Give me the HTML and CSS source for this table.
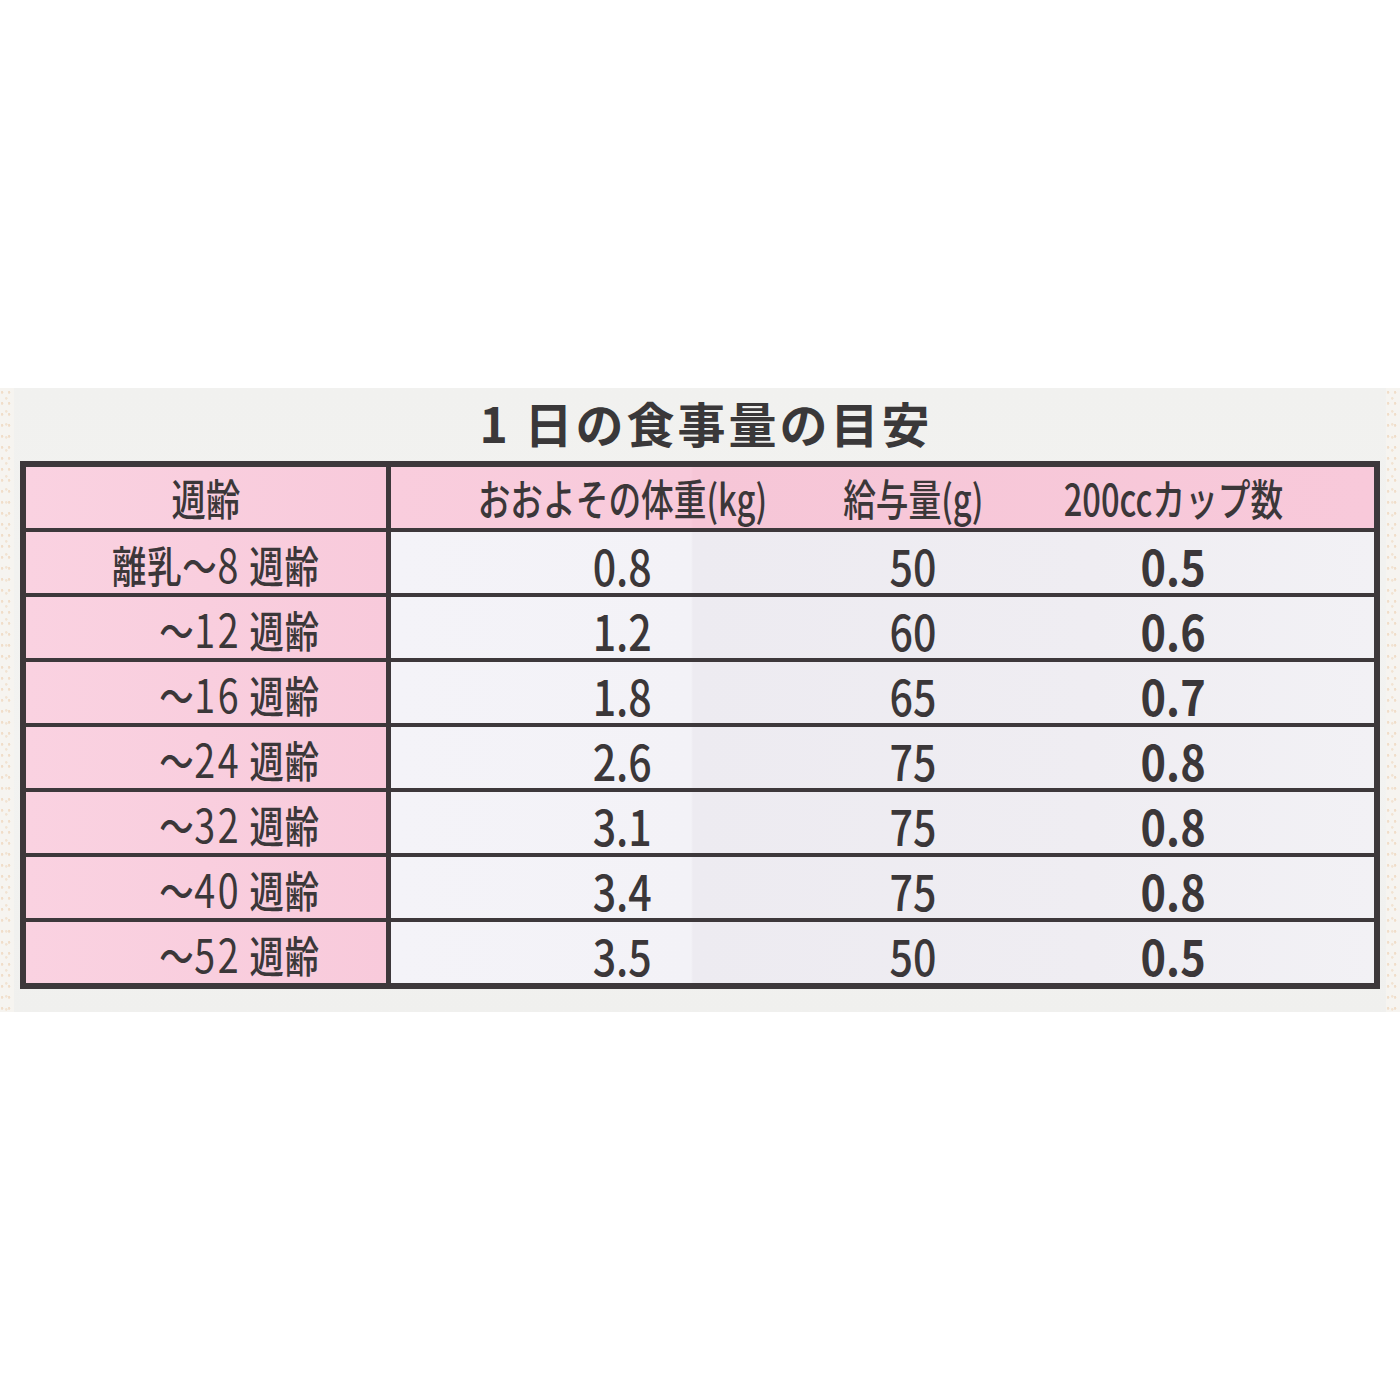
FILE: index.html
```html
<!DOCTYPE html>
<html lang="ja">
<head>
<meta charset="utf-8">
<title>1日の食事量の目安</title>
<link rel="stylesheet" href="styles.css">
</head>
<body>
<div class="panel">
  <div class="edge edge-left"></div>
  <div class="content">
    <h1 class="title">1 日の食事量の目安</h1>
    <div class="table">
      <div class="age head"><span class="sq">週齢</span></div>
      <div class="vals head">
        <div class="cell"><span class="sq">おおよその体重(kg)</span></div>
        <div class="cell"><span class="sq">給与量(g)</span></div>
        <div class="cell"><span class="sq">200ccカップ数</span></div>
      </div>

      <div class="age"><span class="sq">離乳～<span class="n">8</span> 週齢</span></div>
      <div class="vals">
        <div class="cell"><span class="num">0.8</span></div>
        <div class="cell"><span class="num">50</span></div>
        <div class="cell"><span class="num bold">0.5</span></div>
      </div>

      <div class="age"><span class="sq">～<span class="n">12</span> 週齢</span></div>
      <div class="vals">
        <div class="cell"><span class="num">1.2</span></div>
        <div class="cell"><span class="num">60</span></div>
        <div class="cell"><span class="num bold">0.6</span></div>
      </div>

      <div class="age"><span class="sq">～<span class="n">16</span> 週齢</span></div>
      <div class="vals">
        <div class="cell"><span class="num">1.8</span></div>
        <div class="cell"><span class="num">65</span></div>
        <div class="cell"><span class="num bold">0.7</span></div>
      </div>

      <div class="age"><span class="sq">～<span class="n">24</span> 週齢</span></div>
      <div class="vals">
        <div class="cell"><span class="num">2.6</span></div>
        <div class="cell"><span class="num">75</span></div>
        <div class="cell"><span class="num bold">0.8</span></div>
      </div>

      <div class="age"><span class="sq">～<span class="n">32</span> 週齢</span></div>
      <div class="vals">
        <div class="cell"><span class="num">3.1</span></div>
        <div class="cell"><span class="num">75</span></div>
        <div class="cell"><span class="num bold">0.8</span></div>
      </div>

      <div class="age"><span class="sq">～<span class="n">40</span> 週齢</span></div>
      <div class="vals">
        <div class="cell"><span class="num">3.4</span></div>
        <div class="cell"><span class="num">75</span></div>
        <div class="cell"><span class="num bold">0.8</span></div>
      </div>

      <div class="age"><span class="sq">～<span class="n">52</span> 週齢</span></div>
      <div class="vals">
        <div class="cell"><span class="num">3.5</span></div>
        <div class="cell"><span class="num">50</span></div>
        <div class="cell"><span class="num bold">0.5</span></div>
      </div>
    </div>
  </div>
  <div class="edge edge-right"></div>
</div>
</body>
</html>
```

FILE: styles.css
```css
html, body {
  margin: 0;
  padding: 0;
  background: #ffffff;
}

body {
  width: 1400px;
  height: 1400px;
  font-family: "Noto Sans CJK JP", "Noto Sans", sans-serif;
  color: #3b3739;
}

.panel {
  margin-top: 388px;
  height: 624px;
  display: grid;
  grid-template-columns: 14px 1fr 14px;
  background: linear-gradient(180deg, #f1f1ef 0%, #f3f3f1 60%, #f0f0ee 100%);
}

.edge {
  background-color: #f6f4f0;
  background-image:
    radial-gradient(circle at 30% 40%, rgba(226, 170, 110, 0.3) 0 1px, transparent 1.6px),
    radial-gradient(circle at 70% 80%, rgba(226, 170, 110, 0.22) 0 1px, transparent 1.6px);
  background-size: 7px 11px, 9px 13px;
}

.content {
  padding: 0 6px;
  display: flex;
  flex-direction: column;
}

.title {
  margin: 0;
  height: 73px;
  line-height: 68px;
  text-align: center;
  font-size: 48px;
  font-weight: 700;
  letter-spacing: 3px;
  color: #3a3839;
  padding-left: 12px;
}

.table {
  display: grid;
  grid-template-columns: 360px 1fr;
  grid-template-rows: 61px repeat(7, 61px);
  column-gap: 5px;
  row-gap: 4px;
  background: #3d383b;
  border: 6px solid #3d383b;
}

.age {
  background: linear-gradient(90deg, #fad2e1 0%, #f8cadb 100%);
  display: flex;
  align-items: center;
  justify-content: flex-end;
  padding-right: 66px;
  font-size: 43px;
  font-weight: 500;
}

.age.head {
  justify-content: center;
  padding-right: 0;
}

.age .sq {
  transform-origin: right center;
  letter-spacing: 1px;
}

.age.head .sq {
  transform-origin: center center;
  letter-spacing: 0;
}

.age .n {
  font-size: 47px;
  font-weight: 400;
  letter-spacing: 3px;
}

.vals {
  display: grid;
  grid-template-columns: 462px 120px 1fr;
  background: linear-gradient(90deg, #f4f3f8 0px, #f3f2f7 300px, #edebf1 302px, #efedf2 700px, #f2f1f5 100%);
}

.vals.head {
  background: linear-gradient(90deg, #f9cddd 0px, #f8cadb 300px, #f6c6d7 302px, #f8c9da 100%);
}

.cell {
  display: flex;
  align-items: center;
  justify-content: center;
  white-space: nowrap;
}

.sq {
  display: inline-block;
  white-space: nowrap;
  transform: scaleX(0.8);
  line-height: 1;
}

.vals.head .sq {
  font-size: 43px;
  font-weight: 500;
  transform: scaleX(0.76);
}

.num {
  display: inline-block;
  font-size: 49px;
  font-weight: 500;
  line-height: 1;
  transform: scaleX(0.84);
  padding-top: 4px;
}

.num.bold {
  font-weight: 700;
  font-size: 48px;
  transform: scaleX(0.9);
}
```
